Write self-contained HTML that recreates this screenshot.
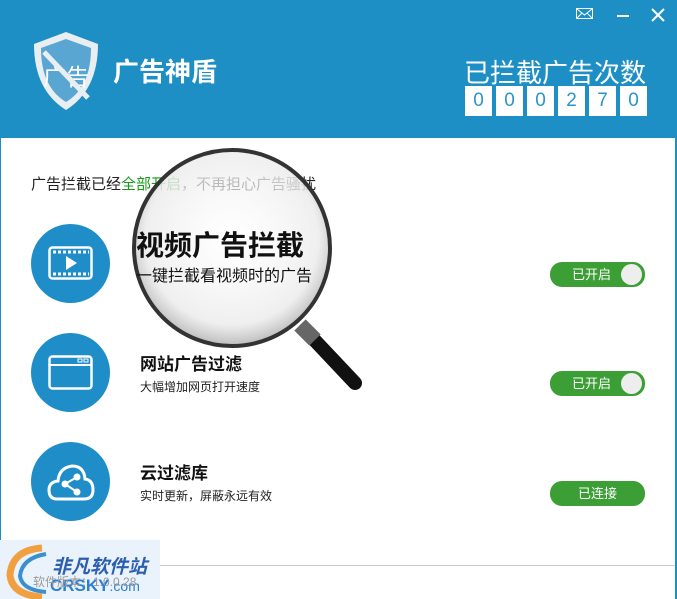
<!DOCTYPE html>
<html><head><meta charset="utf-8"><style>
*{margin:0;padding:0;box-sizing:border-box}
body{width:677px;height:599px;overflow:hidden;background:#fff;font-family:"Liberation Sans","Noto Sans CJK SC",sans-serif;position:relative}
.hdr{position:absolute;left:0;top:0;width:677px;height:138px;background:#1d8fc5}
.rb{position:absolute;right:0;top:0;width:2px;height:599px;background:#1d8fc5}
.lb{position:absolute;left:0;top:0;width:1px;height:599px;background:#1d8fc5}
.t{position:absolute;white-space:nowrap}
.digit{position:absolute;top:86px;width:27px;height:30px;background:#fff;color:#2a95cc;font-size:19px;text-align:center;line-height:30px}
.circ{position:absolute;left:31px;width:79px;height:79px;border-radius:50%;background:#1f8ec8}
.btn{position:absolute;left:550px;width:95px;height:25px;border-radius:12px;background:#3c9f36;color:#fff;font-size:13px;line-height:25px}
.knob{position:absolute;right:3px;top:2px;width:21px;height:21px;border-radius:50%;background:#eee}
</style></head><body>
<div class="hdr"></div><div class="lb"></div><div class="rb"></div>
<svg class="t" style="left:30px;top:30px" width="72" height="82" viewBox="0 0 72 82">
<path d="M36 2 L68 14 Q68 60 36 80 Q4 60 4 14 Z" fill="#e8eef2"/>
<path d="M36 9 L61 18 Q61 57 36 72 Q11 57 11 18 Z" fill="#5aa6d2"/>
<text x="13" y="55" font-size="23" fill="#fff" font-family="Noto Sans CJK SC">广告</text>
<line x1="14" y1="22" x2="58" y2="68" stroke="#e8eef2" stroke-width="5"/>
</svg>
<div class="t" style="left:113px;top:52px;color:#fff;font-size:26px;font-weight:bold">广告神盾</div>
<div class="t" style="left:464px;top:53px;color:#fff;font-size:26px">已拦截广告次数</div>
<div class="digit" style="left:465px">0</div><div class="digit" style="left:496px">0</div><div class="digit" style="left:527px">0</div><div class="digit" style="left:558px">2</div><div class="digit" style="left:589px">7</div><div class="digit" style="left:620px">0</div>
<svg class="t" style="left:576px;top:8px" width="18" height="12"><rect x="0.5" y="0.5" width="16" height="10" fill="none" stroke="#fff"/><path d="M1 1 L8.5 7 L16 1 M1 10 L6 5 M16 10 L11 5" stroke="#fff" fill="none"/></svg>
<div class="t" style="left:617px;top:15px;width:12px;height:2px;background:#fff"></div>
<svg class="t" style="left:651px;top:8px" width="14" height="14"><path d="M1 1L13 13M13 1L1 13" stroke="#fff" stroke-width="2"/></svg>
<div class="t" style="left:31px;top:173px;font-size:15px;color:#222">广告拦截已经<span style="color:#1a9a1a">全部开启</span>，不再担心广告骚扰</div>
<svg class="t" style="left:120px;top:140px" width="250" height="260">
<defs><radialGradient id="g" cx="50%" cy="45%" r="55%"><stop offset="0" stop-color="#fff" stop-opacity="0.5"/><stop offset="0.8" stop-color="#ececec" stop-opacity="0.85"/><stop offset="1" stop-color="#bbb"/></radialGradient></defs>
<line x1="185" y1="190" x2="235" y2="243" stroke="#111" stroke-width="14" stroke-linecap="round"/>
<line x1="180" y1="185" x2="195" y2="200" stroke="#666" stroke-width="16"/>
<circle cx="112" cy="108" r="98" fill="url(#g)" stroke="#333" stroke-width="4"/>
</svg>
<div class="t" style="left:136px;top:224px;font-size:28px;font-weight:bold;color:#111">视频广告拦截</div>
<div class="t" style="left:136px;top:262px;font-size:16px;color:#111">一键拦截看视频时的广告</div>
<div class="circ" style="top:224px"></div>
<svg class="t" style="left:48px;top:246px" width="46" height="36"><rect x="1.5" y="1.5" width="42" height="31" rx="3" fill="none" stroke="#fff" stroke-width="2.5"/><path d="M5 6h36M5 28h36" stroke="#fff" stroke-width="3" stroke-dasharray="3 2"/><path d="M18 10L29 17L18 24Z" fill="#fff"/></svg>
<div class="circ" style="top:333px"></div>
<svg class="t" style="left:48px;top:355px" width="46" height="36"><rect x="1.5" y="1.5" width="42" height="32" rx="3" fill="none" stroke="#fff" stroke-width="2.5"/><line x1="2" y1="10" x2="44" y2="10" stroke="#fff" stroke-width="2"/><rect x="30" y="4" width="4" height="3" fill="none" stroke="#fff"/><rect x="36" y="4" width="4" height="3" fill="none" stroke="#fff"/></svg>
<div class="t" style="left:140px;top:350px;font-size:17px;font-weight:bold;color:#111">网站广告过滤</div>
<div class="t" style="left:140px;top:378px;font-size:12px;color:#222">大幅增加网页打开速度</div>
<div class="circ" style="top:442px"></div>
<svg class="t" style="left:47px;top:462px" width="48" height="40"><path d="M10 37 Q2 37 2 28 Q2 20 11 19 Q12 6 25 4 Q37 4 38 17 Q46 18 46 28 Q46 37 37 37 Z" fill="none" stroke="#fff" stroke-width="3"/><circle cx="30" cy="15" r="3.5" fill="#fff"/><circle cx="18" cy="22" r="3.5" fill="#fff"/><circle cx="30" cy="30" r="3.5" fill="#fff"/><path d="M30 15L18 22L30 30" stroke="#fff" stroke-width="2" fill="none"/></svg>
<div class="t" style="left:140px;top:459px;font-size:17px;font-weight:bold;color:#111">云过滤库</div>
<div class="t" style="left:140px;top:487px;font-size:12px;color:#222">实时更新，屏蔽永远有效</div>
<div class="btn" style="top:262px"><span style="position:absolute;left:22px">已开启</span><div class="knob"></div></div>
<div class="btn" style="top:371px"><span style="position:absolute;left:22px">已开启</span><div class="knob"></div></div>
<div class="btn" style="top:481px;text-align:center">已连接</div>
<div class="t" style="left:160px;top:565px;width:515px;height:1px;background:#ccc"></div>
<div class="t" style="left:0;top:540px;width:160px;height:59px;background:#eaf3fb"></div>
<svg class="t" style="left:2px;top:540px" width="50" height="59"><path d="M40 8 Q10 10 8 35 Q10 55 40 57" fill="none" stroke="#f0a040" stroke-width="7"/><path d="M44 14 Q20 18 18 36 Q20 50 44 52" fill="none" stroke="#3a8fd0" stroke-width="4"/></svg>
<div class="t" style="left:52px;top:552px;font-size:19px;font-weight:bold;color:#2c5fb0;font-style:italic">非凡软件站</div>
<div class="t" style="left:50px;top:576px;font-size:17px;font-weight:bold;color:#2e7fd0">CRSKY<span style="font-weight:normal;font-size:14px">.com</span></div>
<div class="t" style="left:33px;top:573px;font-size:12px;color:#999">软件版本：1.0.0.28</div>
</body></html>
